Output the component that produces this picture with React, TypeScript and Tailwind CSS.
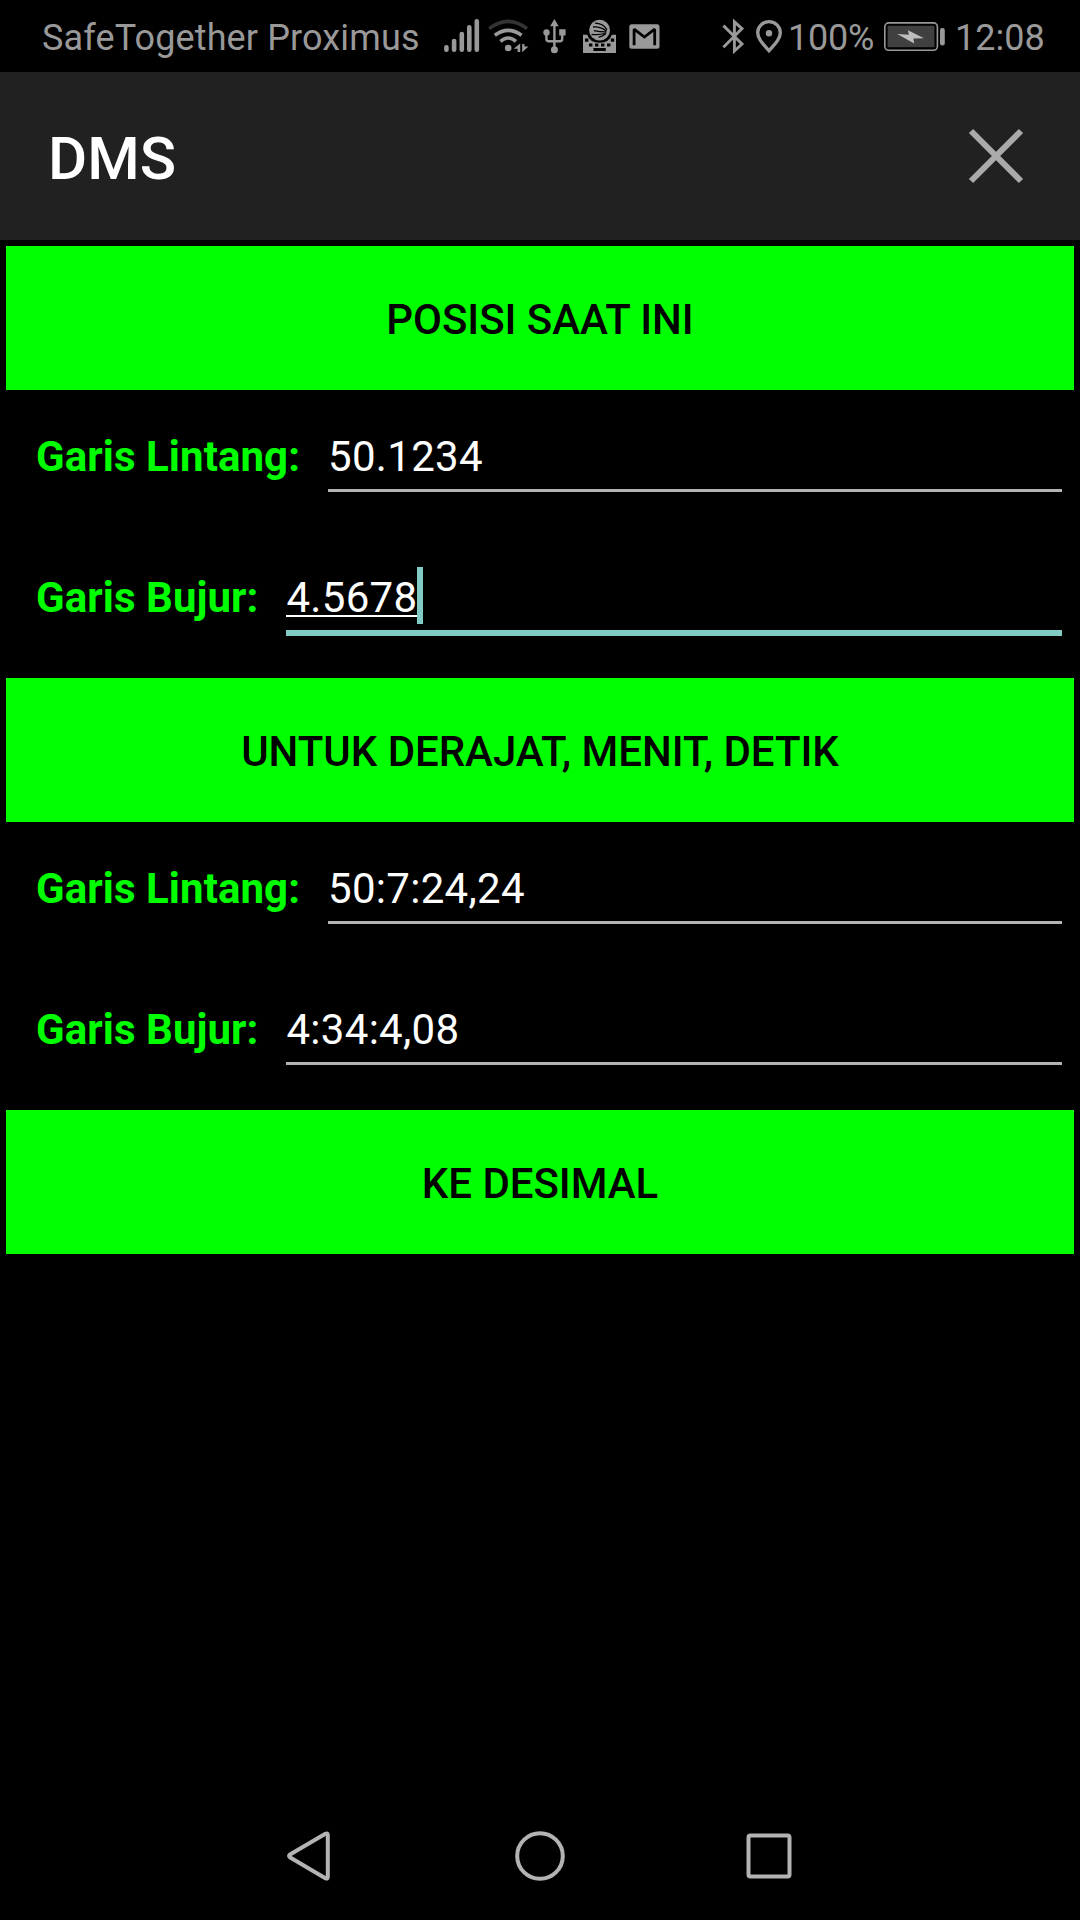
import React from "react";

function StatusBar() {
  return (
    <div className="flex h-[72px] items-center bg-black pl-[42px] text-[36px] leading-[72px] whitespace-nowrap text-[#999999]">
      <span className="h-[72px] w-[402px] pt-[2px] tracking-[0.13px]">SafeTogether Proximus</span>
      {/* signal */}
      <svg width="44" height="72" viewBox="444 0 44 72" fill="none" stroke="currentColor" strokeWidth="4.6" strokeLinecap="round">
        <path d="M446.4 47.3v2.4M454.1 41v8.7M461.8 34v15.7M469.3 27.3v22.4M476.8 21.3v28.4" />
      </svg>
      {/* wifi with data arrows */}
      <svg width="55" height="72" viewBox="488 0 55 72" fill="none" stroke="currentColor" strokeWidth="3.6">
        <path d="M489.2 28.6Q508.2 14 527 28.6" stroke="#333333" />
        <path d="M494.8 35.2Q508.2 25.4 521.6 35.2" />
        <path d="M500.4 41.4Q508.2 34.6 516 41.4" />
        <circle cx="508.2" cy="48" r="3.3" fill="currentColor" stroke="none" />
        <path d="M520.2 43.5V52h-2.6v-3.3h-4zM522.2 44h2.2v2.4h4l-6.2 5.8z" fill="currentColor" stroke="none" />
      </svg>
      {/* usb */}
      <svg width="40" height="72" viewBox="543 0 40 72" fill="none" stroke="currentColor" strokeWidth="2.4">
        <path d="M554.4 49V25M546.4 34v5q0 2.2 2.2 2.2h11.4q2.2 0 2.2-2.2v-5" />
        <path d="M554.4 19l4.3 7.2h-8.6zM559.2 29.2h6.4v6.4h-6.4z" fill="currentColor" stroke="none" />
        <circle cx="546.5" cy="32.4" r="3.2" fill="currentColor" stroke="none" />
        <circle cx="554.4" cy="49.7" r="3.5" fill="currentColor" stroke="none" />
      </svg>
      {/* keyboard */}
      <svg width="46" height="72" viewBox="583 0 46 72" fill="currentColor">
        <path d="M583 34.7h4.2q2.6 8 12.4 8t12.2-8h4.2V53h-33z" />
        <circle cx="599.6" cy="30.2" r="10.4" />
        <path d="M585 38.6h3.4v3.2H585zM610.8 38.6h3.4v3.2h-3.4zM589 43.4h3.4v3H589zM595 43.4h3.4v3H595zM601 43.4h3.4v3H601zM607 43.4h3.4v3H607zM593.4 48h12.4v3h-12.4z" fill="#000000" />
        <path d="M595 23.2q8 .2 12 6.4M593 27q7-.6 13.6 4M591.6 34.4q8 .8 14.8-1.4M593.8 30.6q6 1.2 12.4 1.2M598.6 37.2q4-.8 7-3.2" fill="none" stroke="#000000" strokeWidth="1.3" />
      </svg>
      {/* mail */}
      <svg width="93" height="72" viewBox="629 0 93 72">
        <rect x="629.3" y="24.2" width="30.2" height="24.6" rx="2.5" fill="currentColor" />
        <path d="M634.1 45.3V29.2L644.4 37l10.3-7.8v16.1" fill="none" stroke="#000000" strokeWidth="2.8" strokeMiterlimit="2" />
      </svg>
      {/* bluetooth */}
      <svg width="34" height="72" viewBox="722 0 34 72" fill="none" stroke="currentColor" strokeWidth="2.9">
        <path d="M723.4 25.6L742 44l-7.6 7V21.8l7.6 6.8-18.6 18.6" />
      </svg>
      {/* location */}
      <svg width="32" height="72" viewBox="756 0 32 72" fill="none" stroke="currentColor" strokeWidth="3.4">
        <path d="M769 50.7C763 44 757.7 38.8 757.7 32.7a11.3 11.1 0 0 1 22.6 0C780.3 38.8 775 44 769 50.7z" />
        <circle cx="769" cy="33.3" r="3.2" fill="currentColor" stroke="none" />
      </svg>
      <span className="h-[72px] w-[96px] pt-[2px] tracking-[-0.2px]">100%</span>
      {/* battery */}
      <svg width="71" height="72" viewBox="884 0 71 72">
        <rect x="884.8" y="22.9" width="52.6" height="27.4" rx="4" fill="none" stroke="currentColor" strokeWidth="1.6" />
        <rect x="887.6" y="25.8" width="46.8" height="21.4" fill="#404040" />
        <path d="M897.2 34l11.6.8-.8-4.6 16 8-10.6.2.8 5z" fill="#bdbdbd" />
        <rect x="940" y="28" width="4.8" height="17.4" rx="2.2" fill="currentColor" />
      </svg>
      <span className="h-[72px] pt-[2px]">12:08</span>
    </div>
  );
}

function GreenButton({ label }: { label: string }) {
  return (
    <button className="mx-[6px] block h-[144px] bg-[#00ff00] pt-[3px] text-[42px] font-medium tracking-[-0.04px] text-black">
      {label}
    </button>
  );
}

function Field({ label, value, focused = false }: { label: string; value: string; focused?: boolean }) {
  return (
    <div className="flex pr-[18px] pl-[36px] text-[42px] leading-[50px]">
      <label className="mr-[28px] font-bold tracking-[0.07px] text-[#00ff00]">{label}</label>
      {focused ? (
        <div className="h-[63px] flex-1 border-b-[6px] border-[#80cbc4] tracking-[0.3px] text-white">
          <span className="relative inline-block h-[44px] border-b-2 border-white leading-[50px]">
            {value}
            <span className="absolute top-[-6px] left-full h-[57px] w-[6px] bg-[#80cbc4]" />
          </span>
        </div>
      ) : (
        <div className="h-[60px] flex-1 border-b-[3px] border-[#b3b3b3] tracking-[0.3px] text-white">{value}</div>
      )}
    </div>
  );
}

export default function App() {
  return (
    <div className="flex h-[1920px] w-[1080px] flex-col overflow-hidden bg-black font-['Roboto',sans-serif]">
      <StatusBar />
      <header className="flex h-[168px] items-center justify-between bg-[#212121] pr-[56px] pl-[48px]">
        <h1 className="pt-[5px] text-[60px] leading-[70px] font-medium text-white">DMS</h1>
        <svg width="56" height="56" viewBox="0 0 56 56" fill="none" stroke="#aaaaaa" strokeWidth="6">
          <path d="M3 3l50 50M53 3L3 53" />
        </svg>
      </header>
      <main className="flex flex-1 flex-col pt-[6px]">
        <GreenButton label="POSISI SAAT INI" />
        <section className="flex h-[288px] flex-col gap-[81px] pt-[42px]">
          <Field label="Garis Lintang:" value="50.1234" />
          <Field label="Garis Bujur:" value="4.5678" focused />
        </section>
        <GreenButton label="UNTUK DERAJAT, MENIT, DETIK" />
        <section className="flex h-[288px] flex-col gap-[81px] pt-[42px]">
          <Field label="Garis Lintang:" value="50:7:24,24" />
          <Field label="Garis Bujur:" value="4:34:4,08" />
        </section>
        <GreenButton label="KE DESIMAL" />
      </main>
      <nav className="flex h-[128px] items-center justify-between pr-[286px] pl-[286px]">
        <svg width="48" height="52" viewBox="0 0 48 52" fill="none" stroke="#b3b3b3" strokeWidth="4" strokeLinejoin="round">
          <path d="M3.6 24.8Q2.6 26 3.8 27.2L39.4 48.2Q41.8 49.4 41.8 46.8V5.2Q41.8 2.6 39.4 3.8z" />
        </svg>
        <svg width="52" height="52" viewBox="0 0 52 52" fill="none" stroke="#b3b3b3" strokeWidth="4">
          <circle cx="26" cy="26" r="22.8" />
        </svg>
        <svg width="48" height="48" viewBox="0 0 48 48" fill="none" stroke="#b3b3b3" strokeWidth="4">
          <rect x="2.5" y="3.5" width="41" height="41" rx="2" />
        </svg>
      </nav>
    </div>
  );
}
